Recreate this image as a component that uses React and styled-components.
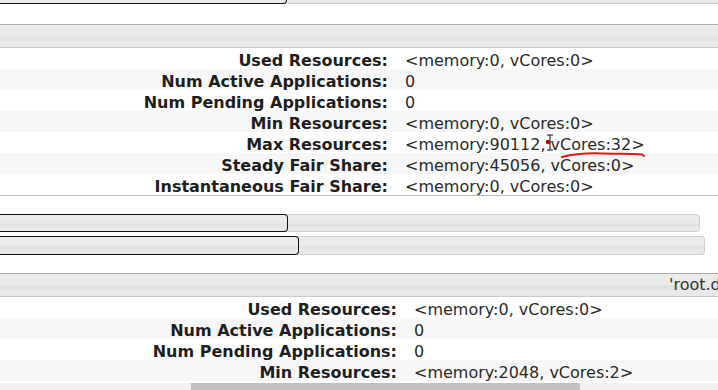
import React from "react";
import styled, { createGlobalStyle } from "styled-components";

const GlobalStyle = createGlobalStyle`
  html, body {
    margin: 0;
    padding: 0;
    background: #fff;
    overflow: hidden;
  }
  body {
    font-family: "DejaVu Sans", Verdana, sans-serif;
    font-size: 16px;
    color: #222;
  }
`;

const glass = `linear-gradient(
  to bottom,
  #ececec 0%,
  #eaeaea 50%,
  #e2e2e2 55%,
  #e3e3e3 70%,
  #e8e8e8 75%,
  #e9e9e9 100%
)`;

const Page = styled.div`
  position: relative;
  display: flex;
  flex-direction: column;
  gap: 18px;
  width: 718px;
  height: 390px;
  overflow: hidden;
`;

// the page is scrolled: only the bottom edge of the previous queue's bars shows
const ScrolledOff = styled.div`
  margin-top: -14px;
  margin-bottom: 2px;
`;

const BarGroup = styled.div`
  display: flex;
  flex-direction: column;
  gap: 4px;
`;

const Track = styled.div`
  position: relative;
  box-sizing: border-box;
  width: ${(p) => p.$width}px;
  height: ${(p) => p.$height || 18}px;
  border: 1px solid #d0d0d0;
  border-left: none;
  border-radius: 0 4px 4px 0;
  background: ${glass};
`;

const Fill = styled.div`
  position: absolute;
  left: 0;
  top: -1px;
  bottom: -1px;
  box-sizing: border-box;
  width: ${(p) => p.$width}px;
  border: 1px solid #111;
  border-left: none;
  border-radius: 0 4px 4px 0;
`;

const Queue = styled.section`
  display: flex;
  flex-direction: column;
`;

const Header = styled.div`
  box-sizing: border-box;
  height: 24px;
  border-top: 1px solid #a9a9a9;
  border-bottom: 1px solid #c9c9c9;
  background: ${glass};
  padding-left: ${(p) => p.$textAt || 0}px;
  line-height: 22px;
  white-space: nowrap;
  color: #333;
`;

const Table = styled.div`
  display: grid;
  grid-template-columns: ${(p) => p.$labelWidth}px 1fr;
  border-bottom: ${(p) => (p.$closed ? "1px solid #bdbdbd" : "none")};
`;

const Cell = styled.div`
  box-sizing: border-box;
  height: 21px;
  padding-top: 5px;
  line-height: 16px;
  white-space: nowrap;
  background: ${(p) => (p.$odd ? "#f7f7f7" : "#fff")};
`;

const Label = styled(Cell)`
  padding-right: 8px;
  text-align: right;
  font-weight: bold;
  color: #1e1e1e;
`;

const Value = styled(Cell)`
  padding-left: 9px;
  color: #2a2a2a;
`;

const Annotation = styled.svg`
  position: absolute;
  left: 540px;
  top: 132px;
  pointer-events: none;
`;

const ScrollTrack = styled.div`
  position: absolute;
  left: 0;
  right: 0;
  bottom: 0;
  height: 7px;
  display: flex;
  padding-left: 191px;
  background: #f1f1f1;
`;

const ScrollThumb = styled.div`
  width: 389px;
  background: #c1c1c1;
`;

const queueRoot = [
  ["Used Resources:", "<memory:0, vCores:0>"],
  ["Num Active Applications:", "0"],
  ["Num Pending Applications:", "0"],
  ["Min Resources:", "<memory:0, vCores:0>"],
  ["Max Resources:", "<memory:90112, vCores:32>"],
  ["Steady Fair Share:", "<memory:45056, vCores:0>"],
  ["Instantaneous Fair Share:", "<memory:0, vCores:0>"],
];

const queueDefault = [
  ["Used Resources:", "<memory:0, vCores:0>"],
  ["Num Active Applications:", "0"],
  ["Num Pending Applications:", "0"],
  ["Min Resources:", "<memory:2048, vCores:2>"],
];

const InfoTable = ({ rows, labelWidth, closed }) => (
  <Table $labelWidth={labelWidth} $closed={closed}>
    {rows.map(([label, value], i) => (
      <React.Fragment key={label}>
        <Label $odd={i % 2 === 1}>{label}</Label>
        <Value $odd={i % 2 === 1}>{value}</Value>
      </React.Fragment>
    ))}
  </Table>
);

const App = () => {
  return (
    <>
      <GlobalStyle />
      <Page>
        <ScrolledOff>
          <Track $width={900}>
            <Fill $width={287} />
          </Track>
        </ScrolledOff>

        <Queue>
          <Header />
          <InfoTable rows={queueRoot} labelWidth={396} closed />
        </Queue>

        <BarGroup>
          <Track $width={700}>
            <Fill $width={288} />
          </Track>
          <Track $width={705} $height={19}>
            <Fill $width={299} />
          </Track>
        </BarGroup>

        <Queue>
          <Header $textAt={669}>'root.default' Queue Status</Header>
          <InfoTable rows={queueDefault} labelWidth={405} />
        </Queue>

        <Annotation width="110" height="30" viewBox="0 0 110 30">
          <circle cx="8" cy="10" r="2.2" fill="#c00000" />
          <path
            d="M7 3 H13 M10 3 V18 M7 18 H13"
            stroke="#111"
            strokeWidth="1"
            fill="none"
          />
          <path
            d="M22 25 C 34 22, 48 21, 62 21.5 S 90 21, 102 22.5 L 104 24"
            stroke="#e01818"
            strokeWidth="2"
            fill="none"
            strokeLinecap="round"
          />
        </Annotation>

        <ScrollTrack>
          <ScrollThumb />
        </ScrollTrack>
      </Page>
    </>
  );
};

export default App;
